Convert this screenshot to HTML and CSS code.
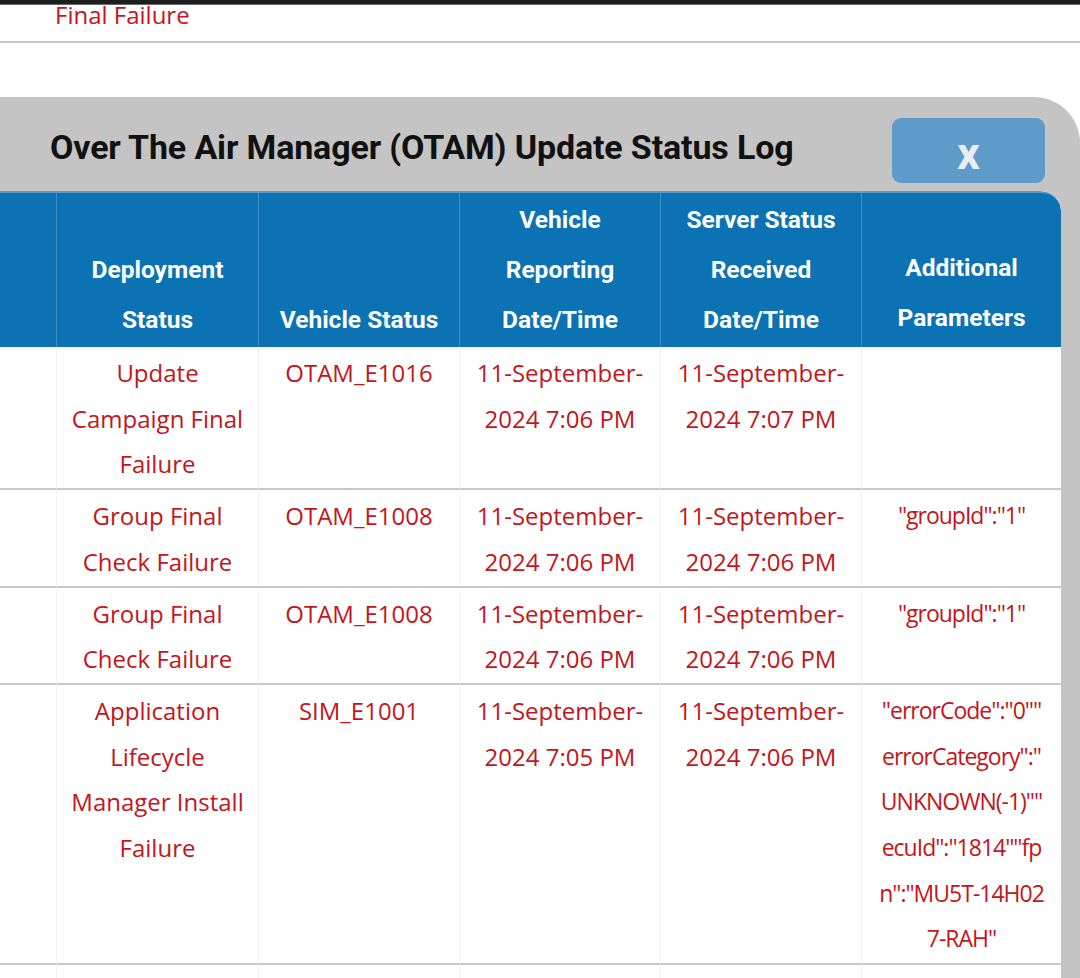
FILE: index.html
```html
<!DOCTYPE html>
<html lang="en">
<head>
<meta charset="utf-8">
<title>OTAM Update Status Log</title>
<link rel="stylesheet" href="styles.css">
</head>
<body>
<div class="topbar"></div>
<div class="prev-row">
  <span class="prev-text">Final Failure</span>
</div>
<div class="modal">
  <div class="modal-head">
    <h1 class="modal-title">Over The Air Manager (OTAM) Update Status Log</h1>
    <button class="close-btn">x</button>
  </div>
  <table class="log">
    <colgroup>
      <col class="c0"><col class="c1"><col class="c2"><col class="c3"><col class="c4"><col class="c5">
    </colgroup>
    <thead>
      <tr>
        <th></th>
        <th>Deployment<br>Status</th>
        <th>Vehicle Status</th>
        <th>Vehicle<br>Reporting<br>Date/Time</th>
        <th>Server Status<br>Received<br>Date/Time</th>
        <th class="th-add">Additional<br>Parameters</th>
      </tr>
    </thead>
    <tbody>
      <tr>
        <td></td>
        <td>Update<br>Campaign Final<br>Failure</td>
        <td>OTAM_E1016</td>
        <td>11-September-<br>2024 7:06 PM</td>
        <td>11-September-<br>2024 7:07 PM</td>
        <td class="params"></td>
      </tr>
      <tr>
        <td></td>
        <td>Group Final<br>Check Failure</td>
        <td>OTAM_E1008</td>
        <td>11-September-<br>2024 7:06 PM</td>
        <td>11-September-<br>2024 7:06 PM</td>
        <td class="params">"groupId":"1"</td>
      </tr>
      <tr>
        <td></td>
        <td>Group Final<br>Check Failure</td>
        <td>OTAM_E1008</td>
        <td>11-September-<br>2024 7:06 PM</td>
        <td>11-September-<br>2024 7:06 PM</td>
        <td class="params">"groupId":"1"</td>
      </tr>
      <tr>
        <td></td>
        <td>Application<br>Lifecycle<br>Manager Install<br>Failure</td>
        <td>SIM_E1001</td>
        <td>11-September-<br>2024 7:05 PM</td>
        <td>11-September-<br>2024 7:06 PM</td>
        <td class="params">"errorCode":"0""<br>errorCategory":"<br>UNKNOWN(-1)""<br>ecuId":"1814""fp<br>n":"MU5T-14H02<br>7-RAH"</td>
      </tr>
      <tr>
        <td></td>
        <td></td>
        <td></td>
        <td></td>
        <td></td>
        <td class="params">"fpn":"MU5T-14<br>H027-RAH"</td>
      </tr>
    </tbody>
  </table>
</div>
</body>
</html>
```

FILE: styles.css
```css
html, body {
  margin: 0;
  padding: 0;
  background: #ffffff;
  height: 978px;
  overflow: hidden;
}

body {
  font-family: "Open Sans", "Liberation Sans", sans-serif;
}

.topbar {
  height: 4px;
  background: #1e1e1e;
  border-bottom: 1px solid #6a6a6a;
}

.prev-row {
  height: 36px;
  border-bottom: 2px solid #c6c6c6;
  padding-left: 55px;
}

.prev-text {
  display: block;
  color: #c4151c;
  font-size: 24px;
  line-height: 20px;
  font-family: "Open Sans", sans-serif;
}

.modal {
  margin-top: 54px;
  background: #c4c4c4;
  border-top-right-radius: 46px;
  padding-top: 21px;
  height: 900px;
}

.modal-head {
  display: flex;
  align-items: center;
  justify-content: space-between;
  padding-left: 50px;
  padding-right: 35px;
  height: 65px;
}

.modal-title {
  margin: 0;
  font-family: "Roboto", "Liberation Sans", sans-serif;
  font-weight: 700;
  font-size: 34px;
  line-height: 40px;
  color: #111111;
  white-space: nowrap;
  letter-spacing: -0.15px;
  margin-bottom: 8px;
}

.close-btn {
  width: 153px;
  height: 65px;
  border: none;
  border-radius: 9px;
  background: #5e9bc8;
  color: #e9eef3;
  font-family: "Roboto", "Liberation Sans", sans-serif;
  font-weight: 700;
  font-size: 45px;
  line-height: 1;
  padding: 6px 0 0 0;
}

.log {
  margin-top: 8px;
  width: 1061px;
  border-collapse: separate;
  border-spacing: 0;
  table-layout: fixed;
  background: #ffffff;
  border-top-right-radius: 20px;
  overflow: hidden;
}

.c0 { width: 56px; }
.c1 { width: 202px; }
.c2 { width: 201px; }
.c3 { width: 201px; }
.c4 { width: 201px; }
.c5 { width: 200px; }

.log thead th {
  background: #0b72b3;
  color: #ffffff;
  font-family: "Roboto", "Liberation Sans", sans-serif;
  font-weight: 700;
  font-size: 24.5px;
  line-height: 50px;
  vertical-align: bottom;
  text-align: center;
  padding: 0 0 2px 0;
  border-left: 1px solid #3f8ec6;
  border-top: 2px solid #5a9dcd;
  height: 150px;
}

.log thead th:first-child {
  border-left: none;
}

.log thead th:last-child {
  border-top-right-radius: 20px;
}

.log thead th.th-add {
  padding-bottom: 4px;
}

.log tbody td {
  color: #c4151c;
  font-family: "Open Sans", "Liberation Sans", sans-serif;
  font-size: 24px;
  line-height: 45.7px;
  text-align: center;
  vertical-align: top;
  padding: 3px 0 1px 0;
  border-bottom: 2px solid #c9c9c9;
  border-left: 1px solid #f3f3f3;
  white-space: nowrap;
}

.log tbody td:first-child {
  border-left: none;
}

.log tbody td.params {
  font-size: 23px;
  letter-spacing: -1px;
}
```
